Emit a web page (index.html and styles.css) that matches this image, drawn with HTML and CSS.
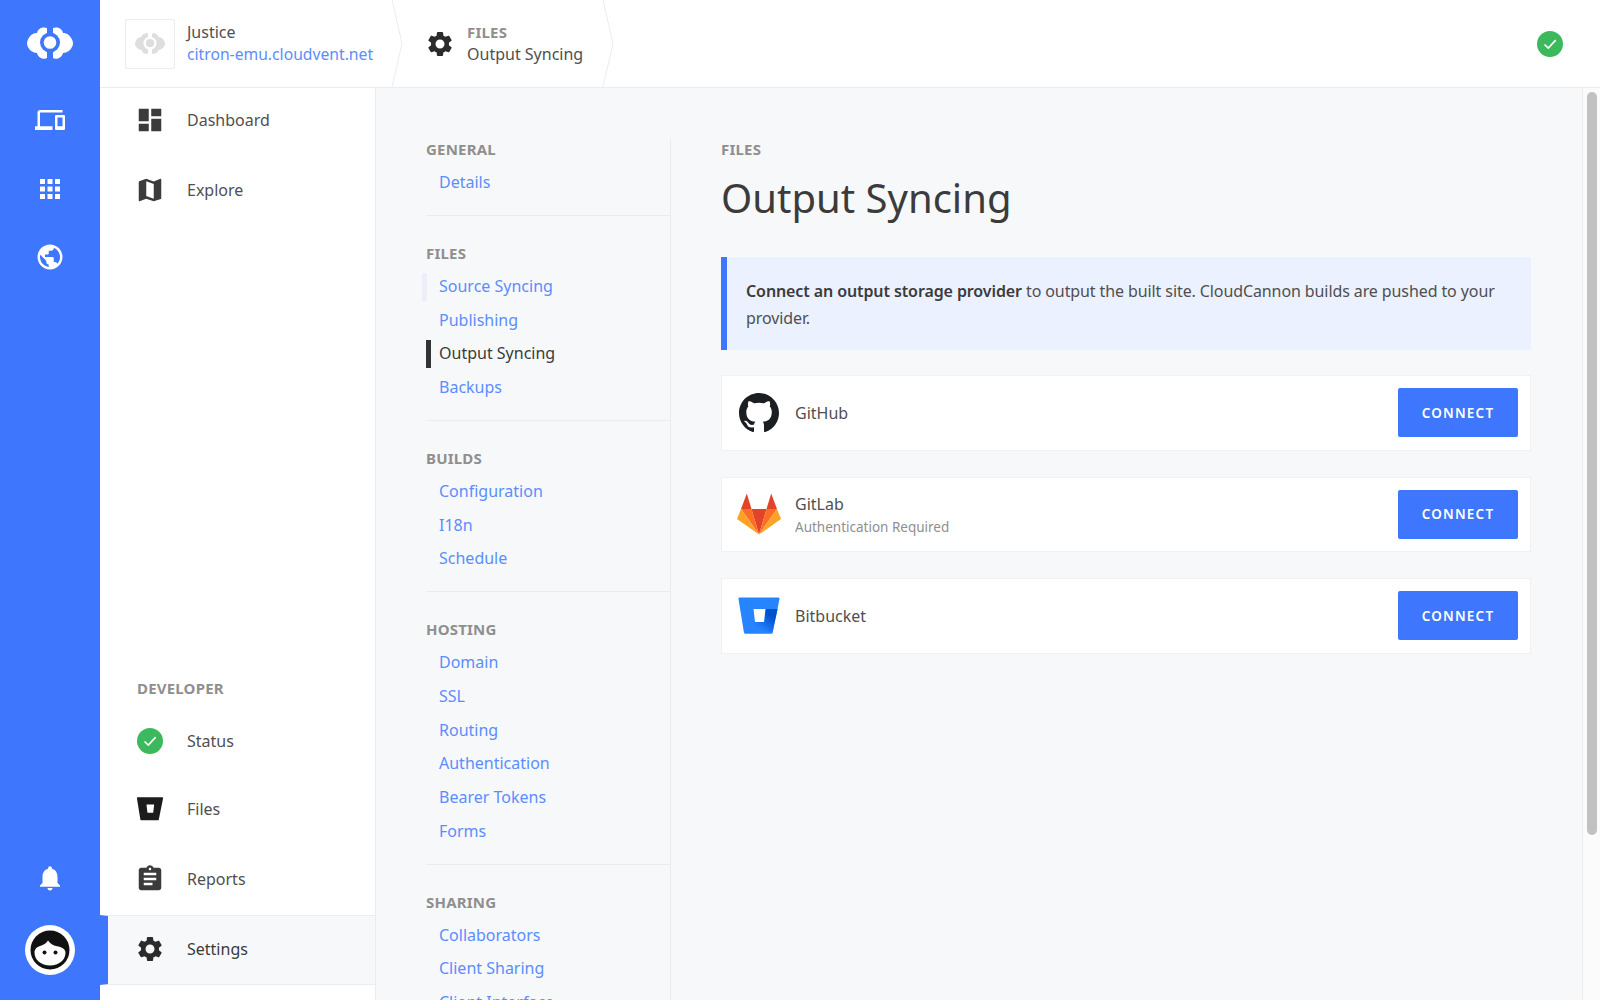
FILE: index.html
```html
<!DOCTYPE html>
<html lang="en">
<head>
    <meta charset="UTF-8">
    <meta name="viewport" content="width=device-width, initial-scale=1.0">
    <title>Output Syncing</title>
    <link rel="stylesheet" href="styles.css">
</head>
<body>
    <svg class="defs" width="0" height="0">
        <defs>
            <linearGradient id="bucketBlue" x1="1" y1="0.25" x2="0.4" y2="0.85">
                <stop offset="0.2" stop-color="#0052cc"/>
                <stop offset="1" stop-color="#2684ff"/>
            </linearGradient>
            <symbol id="gear" viewBox="0 0 24 24"><path d="M19.14 12.94c.04-.3.06-.61.06-.94 0-.32-.02-.64-.07-.94l2.03-1.58a.49.49 0 0 0 .12-.61l-1.92-3.32a.488.488 0 0 0-.59-.22l-2.39.96c-.5-.38-1.03-.7-1.62-.94l-.36-2.54a.484.484 0 0 0-.48-.41h-3.84c-.24 0-.43.17-.47.41l-.36 2.54c-.59.24-1.13.57-1.62.94l-2.39-.96c-.22-.08-.47 0-.59.22L2.74 8.87c-.12.21-.08.47.12.61l2.03 1.58c-.05.3-.09.63-.09.94s.02.64.07.94l-2.03 1.58a.49.49 0 0 0-.12.61l1.92 3.32c.12.22.37.29.59.22l2.39-.96c.5.38 1.03.7 1.62.94l.36 2.54c.05.24.24.41.48.41h3.84c.24 0 .44-.17.47-.41l.36-2.54c.59-.24 1.13-.56 1.62-.94l2.39.96c.22.08.47 0 .59-.22l1.92-3.32c.12-.22.07-.47-.12-.61l-2.01-1.58zM12 15.6c-1.98 0-3.6-1.62-3.6-3.6s1.62-3.6 3.6-3.6 3.6 1.62 3.6 3.6-1.62 3.6-3.6 3.6z"/></symbol>
            <symbol id="check" viewBox="0 0 26 26"><circle cx="13" cy="13" r="13" fill="#3cb95d"/><path d="M7.5 13.5l3.8 3.6 7.4-8" fill="none" stroke="#fff" stroke-width="1.6"/></symbol>
            <symbol id="cloud" viewBox="0 0 46 32">
                <path d="M23 3.2C21 1 18.300 0 15.500 .6 12.500 1.200 10.500 3.400 10 6 5.800 6 2.700 8.500 .9 12.800-.3 15-.3 17.500 1 20c1.700 3.600 4.900 5.800 9 6 .6 3 2.900 5.200 6 5.700 2.700.3 5.300-.6 7-2.700 1.700 2.100 4.300 3 7 2.700 3.100-.5 5.400-2.700 6-5.700 4.100-.2 7.300-2.400 9-6 1.300-2.500 1.300-5 .1-7.200C43.300 8.500 40.200 6 36 6c-.5-2.600-2.500-4.800-5.500-5.400C27.700 0 25 1 23 3.200z"/>
                <circle class="cloud-cut" cx="23" cy="15.500" r="10"/>
                <rect class="cloud-cut" x="20" y="-1" width="6" height="34"/>
                <circle cx="23" cy="15.500" r="6.300"/>
            </symbol>
        </defs>
    </svg>

    <div class="app">
        <aside class="rail">
            <div class="rail-group">
                <svg class="rail-logo"><use href="#cloud"/></svg>
                <a class="rail-item rail-devices"><svg viewBox="0 0 24 24"><path d="M4 6h18V4H4c-1.100 0-2 .9-2 2v11H0v3h14v-3H4V6zm19 2h-6c-.55 0-1 .45-1 1v10c0 .55.45 1 1 1h6c.55 0 1-.45 1-1V9c0-.55-.45-1-1-1zm-1 9h-4v-7h4v7z"/></svg></a>
                <a class="rail-item"><svg viewBox="0 0 24 24"><path d="M4 8h4V4H4v4zm6 12h4v-4h-4v4zm-6 0h4v-4H4v4zm0-6h4v-4H4v4zm6 0h4v-4h-4v4zm6-10v4h4V4h-4zm-6 4h4V4h-4v4zm6 6h4v-4h-4v4zm0 6h4v-4h-4v4z"/></svg></a>
                <a class="rail-item"><svg viewBox="0 0 24 24"><path d="M12 2C6.480 2 2 6.480 2 12s4.480 10 10 10 10-4.480 10-10S17.520 2 12 2zm-1 17.930c-3.950-.49-7-3.850-7-7.930 0-.62.08-1.210.21-1.790L9 15v1c0 1.100.9 2 2 2v1.930zm6.900-2.540c-.26-.81-1-1.390-1.900-1.390h-1v-3c0-.55-.45-1-1-1H8v-2h2c.55 0 1-.45 1-1V7h2c1.100 0 2-.9 2-2v-.41c2.930 1.190 5 4.060 5 7.410 0 2.080-.8 3.970-2.100 5.390z"/></svg></a>
            </div>
            <div class="rail-group">
                <a class="rail-item rail-bell"><svg viewBox="0 0 24 24"><path d="M12 22c1.100 0 2-.9 2-2h-4c0 1.100.9 2 2 2zm6-6v-5c0-3.070-1.630-5.640-4.500-6.320V4c0-.83-.67-1.500-1.500-1.500s-1.500.67-1.500 1.500v.68C7.640 5.360 6 7.920 6 11v5l-2 2v1h16v-1l-2-2z"/></svg></a>
                <div class="avatar">
                    <svg viewBox="0 0 50 50">
                        <circle cx="25" cy="25" r="25" fill="#fff"/>
                        <circle cx="25" cy="25" r="19.500" fill="#111"/>
                        <path d="M9.500 27.500c0-3.500 2.500-5.500 5.500-6.500 4-1.400 6.500-3 8-5.500 2 3 5 5 9 5.800 4 .8 8.500 2.500 8.500 6.200 0 7.500-6.500 13-15.500 13S9.500 35 9.500 27.500z" fill="#fff"/>
                        <circle cx="19.500" cy="27.500" r="2" fill="#111"/>
                        <circle cx="30.500" cy="27.500" r="2" fill="#111"/>
                    </svg>
                </div>
            </div>
        </aside>

        <div class="workspace">
            <header class="topbar">
                <div class="crumb crumb-site">
                    <div class="site-thumb"><svg><use href="#cloud"/></svg></div>
                    <div class="crumb-text">
                        <span class="site-name">Justice</span>
                        <a class="site-url">citron-emu.cloudvent.net</a>
                    </div>
                </div>
                <svg class="crumb-sep" viewBox="0 0 12 87"><path d="M1 0l10 43.500L1 87"/></svg>
                <div class="crumb crumb-page">
                    <svg class="crumb-icon"><use href="#gear"/></svg>
                    <div class="crumb-text">
                        <span class="crumb-label">FILES</span>
                        <span class="site-name">Output Syncing</span>
                    </div>
                </div>
                <svg class="crumb-sep" viewBox="0 0 12 87"><path d="M1 0l10 43.500L1 87"/></svg>
                <svg class="topbar-status"><use href="#check"/></svg>
            </header>

            <div class="body-row">
                <nav class="sidenav">
                    <div class="nav-group">
                        <a class="nav-item"><svg class="nav-icon" viewBox="0 0 24 24"><path d="M3 13h8V3H3v10zm0 8h8v-6H3v6zm10 0h8V11h-8v10zm0-18v6h8V3h-8z"/></svg>Dashboard</a>
                        <a class="nav-item"><svg class="nav-icon" viewBox="0 0 24 24"><path d="M20.500 3l-.16.03L15 5.100 9 3 3.360 4.900c-.21.07-.36.25-.36.48V20.500c0 .28.22.5.5.5l.16-.03L9 18.900l6 2.100 5.640-1.900c.21-.07.36-.25.36-.48V3.500c0-.28-.22-.5-.5-.5zM15 19l-6-2.110V5l6 2.110V19z"/></svg>Explore</a>
                    </div>
                    <div class="nav-group">
                        <div class="nav-heading">DEVELOPER</div>
                        <a class="nav-item nav-item-status"><svg class="nav-icon nav-status"><use href="#check"/></svg>Status</a>
                        <a class="nav-item nav-item-files"><svg class="nav-icon" viewBox="-3 -5 47 47"><path d="M1.300 0A1.300 1.300 0 0 0 0 1.500l5.400 33.300a1.800 1.800 0 0 0 1.800 1.500h25.700a1.300 1.300 0 0 0 1.300-1.100L41 1.500A1.300 1.300 0 0 0 39.700 0z" fill="#1c1c1c"/><path d="M15 11.500h12l-1.500 13h-9z" fill="#fff"/></svg>Files</a>
                        <a class="nav-item nav-item-reports"><svg class="nav-icon" viewBox="0 0 24 24"><path d="M19 3h-4.180C14.400 1.840 13.300 1 12 1c-1.300 0-2.400.84-2.820 2H5c-1.100 0-2 .9-2 2v14c0 1.100.9 2 2 2h14c1.100 0 2-.9 2-2V5c0-1.100-.9-2-2-2zm-7 0c.55 0 1 .45 1 1s-.45 1-1 1-1-.45-1-1 .45-1 1-1zm2 14H7v-2h7v2zm3-4H7v-2h10v2zm0-4H7V7h10v2z"/></svg>Reports</a>
                        <a class="nav-item nav-item-active"><svg class="nav-icon"><use href="#gear"/></svg>Settings</a>
                    </div>
                </nav>

                <main class="content">
                    <div class="subnav">
                        <section class="sub-section">
                            <h4 class="label">GENERAL</h4>
                            <a class="sub-link">Details</a>
                        </section>
                        <section class="sub-section">
                            <h4 class="label">FILES</h4>
                            <a class="sub-link sub-link-hover">Source Syncing</a>
                            <a class="sub-link">Publishing</a>
                            <a class="sub-link sub-link-current">Output Syncing</a>
                            <a class="sub-link">Backups</a>
                        </section>
                        <section class="sub-section">
                            <h4 class="label">BUILDS</h4>
                            <a class="sub-link">Configuration</a>
                            <a class="sub-link">I18n</a>
                            <a class="sub-link">Schedule</a>
                        </section>
                        <section class="sub-section">
                            <h4 class="label">HOSTING</h4>
                            <a class="sub-link">Domain</a>
                            <a class="sub-link">SSL</a>
                            <a class="sub-link">Routing</a>
                            <a class="sub-link">Authentication</a>
                            <a class="sub-link">Bearer Tokens</a>
                            <a class="sub-link">Forms</a>
                        </section>
                        <section class="sub-section">
                            <h4 class="label">SHARING</h4>
                            <a class="sub-link">Collaborators</a>
                            <a class="sub-link">Client Sharing</a>
                            <a class="sub-link">Client Interface</a>
                        </section>
                    </div>

                    <div class="panel">
                        <h4 class="label">FILES</h4>
                        <h1 class="panel-title">Output Syncing</h1>
                        <p class="notice"><strong>Connect an output storage provider</strong> to output the built site. CloudCannon builds are pushed to your provider.</p>

                        <div class="provider">
                            <svg class="provider-logo" viewBox="-1.200 -1.200 18.400 18.400"><path fill="#1b1f23" d="M8 0C3.580 0 0 3.580 0 8c0 3.540 2.290 6.530 5.470 7.590.4.07.55-.17.55-.38 0-.19-.01-.82-.01-1.490-2.010.37-2.530-.49-2.690-.94-.09-.23-.48-.94-.82-1.130-.28-.15-.68-.52-.01-.53.630-.01 1.080.58 1.230.82.72 1.210 1.870.87 2.330.66.07-.52.28-.87.51-1.070-1.780-.2-3.640-.89-3.640-3.950 0-.87.31-1.590.82-2.150-.08-.2-.36-1.020.08-2.120 0 0 .67-.21 2.200.82.64-.18 1.320-.27 2-.27.68 0 1.360.09 2 .27 1.530-1.040 2.200-.82 2.200-.82.44 1.100.16 1.920.08 2.120.51.56.82 1.270.82 2.150 0 3.070-1.870 3.750-3.650 3.950.29.25.54.73.54 1.480 0 1.070-.01 1.930-.01 2.200 0 .21.15.46.55.38A8.013 8.013 0 0 0 16 8c0-4.420-3.580-8-8-8z"/></svg>
                            <div class="provider-text"><span>GitHub</span></div>
                            <button class="connect">CONNECT</button>
                        </div>
                        <div class="provider">
                            <svg class="provider-logo" viewBox="-1 -2.500 46 46">
                                <polygon fill="#e24329" points="22,41 14.500,15.500 29.500,15.500"/>
                                <polygon fill="#fc6d26" points="22,41 14.500,15.500 4,15.500"/>
                                <polygon fill="#fc6d26" points="22,41 29.500,15.500 40,15.500"/>
                                <polygon fill="#fca326" points="4,15.500 0,25.500 22,41"/>
                                <polygon fill="#fca326" points="40,15.500 44,25.500 22,41"/>
                                <polygon fill="#e24329" points="4,15.500 9.800,0 14.500,15.500"/>
                                <polygon fill="#e24329" points="40,15.500 34.200,0 29.500,15.500"/>
                            </svg>
                            <div class="provider-text"><span>GitLab</span><small>Authentication Required</small></div>
                            <button class="connect">CONNECT</button>
                        </div>
                        <div class="provider">
                            <svg class="provider-logo" viewBox="-2.500 -4.500 46 46">
                                <path fill="#2684ff" d="M1.300 0A1.300 1.300 0 0 0 0 1.500l5.400 33.300a1.800 1.800 0 0 0 1.800 1.500h25.700a1.300 1.300 0 0 0 1.300-1.100L41 1.500A1.300 1.300 0 0 0 39.700 0z"/>
                                <path fill="url(#bucketBlue)" d="M39.100 11.500H27l-1.500 13h-9L7 34.200l.2.100h25.700a1.300 1.300 0 0 0 1.300-1.100z"/>
                                <path fill="#fff" d="M15 11.500h12l-1.500 13h-9z"/>
                            </svg>
                            <div class="provider-text"><span>Bitbucket</span></div>
                            <button class="connect">CONNECT</button>
                        </div>
                    </div>
                </main>

                <div class="scrollbar"><div class="scrollbar-thumb"></div></div>
            </div>
        </div>
    </div>
</body>
</html>
```

FILE: styles.css
```css
* {
    box-sizing: border-box;
}
html, body {
    height: 100%;
}
body {
    margin: 0;
    overflow: hidden;
    font-family: "Noto Sans", "Open Sans", sans-serif;
    font-size: 16px;
    color: #4f4f4f;
    background-color: #f7f8fa;
}
a {
    color: #5c8dff;
    text-decoration: none;
}
.defs {
    display: block;
    height: 0;
}
.app {
    display: flex;
    height: 1000px;
}

/* blue rail */
.rail {
    width: 100px;
    flex: none;
    display: flex;
    flex-direction: column;
    justify-content: space-between;
    align-items: center;
    background-color: #3e76fe;
    color: #fff;
    padding-top: 27px;
    padding-bottom: 25px;
}
.rail-group {
    display: flex;
    flex-direction: column;
    align-items: center;
}
.rail-logo {
    width: 46px;
    height: 32px;
    fill: #fff;
    --cut: #3e76fe;
    margin-bottom: 46px;
}
.cloud-cut {
    fill: var(--cut);
}
.rail-item {
    display: block;
    width: 30px;
    height: 30px;
    margin-bottom: 38px;
}
.rail-devices {
    margin-bottom: 39px;
}
.rail-bell {
    margin-bottom: 32px;
}
.rail-item svg {
    display: block;
    width: 30px;
    height: 30px;
    fill: #fff;
}
.avatar {
    width: 50px;
    height: 50px;
}
.avatar svg {
    display: block;
}

/* top bar */
.workspace {
    flex: 1;
    min-width: 0;
    display: flex;
    flex-direction: column;
}
.topbar {
    flex: none;
    height: 88px;
    display: flex;
    align-items: center;
    background: #fff;
    border-bottom: 1px solid #ececec;
}
.crumb {
    display: flex;
    align-items: center;
}
.crumb-site {
    width: 291px;
    padding-left: 25px;
}
.crumb-page {
    width: 199px;
    padding-left: 22px;
}
.site-thumb {
    width: 50px;
    height: 50px;
    margin-right: 12px;
    border: 1px solid #ececec;
    border-radius: 2px;
    display: flex;
    align-items: center;
    justify-content: center;
}
.site-thumb svg {
    width: 30px;
    height: 21px;
    fill: #dedede;
    --cut: #fff;
}
.crumb-text {
    display: flex;
    flex-direction: column;
    line-height: 22px;
    margin-top: -2px;
}
.site-name {
    white-space: nowrap;
}
.site-url {
    white-space: nowrap;
    font-size: 15.7px;
}
.crumb-label {
    font-size: 15px;
    letter-spacing: 0.2px;
    font-weight: 700;
    color: #8f8f8f;
}
.crumb-icon {
    width: 30px;
    height: 30px;
    margin-right: 12px;
    fill: #2b2b2b;
}
.crumb-sep {
    flex: none;
    width: 12px;
    height: 87px;
    fill: none;
    stroke: #ececec;
}
.topbar-status {
    width: 26px;
    height: 26px;
    margin-left: auto;
    margin-right: 37px;
}

/* left nav */
.body-row {
    flex: 1;
    min-height: 0;
    display: flex;
}
.sidenav {
    width: 276px;
    flex: none;
    display: flex;
    flex-direction: column;
    justify-content: space-between;
    background: #fff;
    border-right: 1px solid #ececec;
    padding-bottom: 15px;
}
.nav-item {
    display: flex;
    align-items: center;
    height: 70px;
    padding-left: 35px;
    margin-top: -3px;
    margin-bottom: 3px;
    color: #4f4f4f;
}
.nav-group:last-child .nav-item {
    margin: 0;
}
.nav-icon {
    width: 30px;
    height: 30px;
    margin-right: 22px;
    fill: #3b3b3b;
}
.nav-status {
    width: 26px;
    height: 26px;
    margin-left: 2px;
    margin-right: 24px;
}
.nav-heading {
    padding-left: 37px;
    margin-bottom: 7px;
    font-size: 15px;
    letter-spacing: 0.2px;
    font-weight: 700;
    color: #8f8f8f;
}
.nav-item-status {
    padding-top: 2px;
}
.nav-item-files {
    padding-bottom: 2px;
}
.nav-item-reports {
    padding-bottom: 3px;
}
.nav-item-active {
    height: 70px;
    padding-left: 27px;
    padding-bottom: 2px;
    border-left: 8px solid #3e76fe;
    border-top: 1px solid #ececec;
    border-bottom: 1px solid #ececec;
    background-color: #f7f8fa;
    color: #3b3b3b;
}
.nav-item-active .nav-icon {
    fill: #2b2b2b;
}

/* settings list */
.content {
    flex: 1;
    min-width: 0;
    display: flex;
    align-items: flex-start;
    padding: 51px 51px 0 50px;
    overflow: hidden;
}
.subnav {
    width: 245px;
    flex: none;
    border-right: 1px solid #ececec;
    padding-bottom: 40px;
}
.sub-section {
    border-bottom: 1px solid #ececec;
    padding-bottom: 15px;
    margin-bottom: 27px;
}
.sub-section:last-child {
    border-bottom: none;
}
.label {
    margin: 0 0 7px;
    font-size: 15px;
    letter-spacing: 0.2px;
    line-height: 20px;
    font-weight: 700;
    color: #8f8f8f;
}
.sub-link {
    display: block;
    position: relative;
    height: 33.75px;
    line-height: 33.75px;
    padding-left: 13px;
}
.sub-link-hover::before,
.sub-link-current::before {
    content: "";
    position: absolute;
    top: 3px;
    width: 5px;
    height: 28px;
}
.sub-link-hover::before {
    left: -4px;
    background-color: #eceffa;
}
.sub-link-current::before {
    left: 0;
    background-color: #333;
}
.sub-link-current {
    color: #3b3b3b;
}

/* main panel */
.panel {
    flex: 1;
    min-width: 0;
    padding-left: 50px;
}
.panel-title {
    margin: 12px 0 32px;
    font-size: 40px;
    line-height: 54px;
    font-weight: 400;
    color: #3b3b3b;
}
.notice {
    margin: 0 0 25px;
    padding: 21px 20px 18px 19px;
    border-left: 6px solid #3e76fe;
    background-color: #ebf1fe;
    line-height: 27px;
    letter-spacing: -0.1px;
    color: #4f4f4f;
}
.notice strong {
    font-weight: 600;
    color: #3b3b3b;
}
.provider {
    display: flex;
    align-items: center;
    height: 75.5px;
    margin-bottom: 26px;
    padding: 0 12px 0 14px;
    background: #fff;
    border: 1px solid #f0f1f3;
}
.provider-logo {
    width: 46px;
    height: 46px;
    margin-right: 13px;
}
.provider-text {
    flex: 1;
    display: flex;
    flex-direction: column;
}
.provider-text small {
    margin-top: 3px;
    font-size: 13.5px;
    color: #8f8f8f;
}
.connect {
    width: 120px;
    height: 49px;
    background-color: #3e76fe;
    color: #fff;
    border: none;
    border-radius: 2px;
    font-family: inherit;
    font-size: 13.5px;
    font-weight: 600;
    letter-spacing: 1.2px;
}

/* fake scrollbar, the capture shows it parked at the top */
.scrollbar {
    width: 18px;
    flex: none;
    padding: 4px 3px 0 4px;
    background: #fbfbfb;
    border-left: 1px solid #ececec;
}
.scrollbar-thumb {
    height: 743px;
    border-radius: 6px;
    background-color: #c1c1c1;
}
```
